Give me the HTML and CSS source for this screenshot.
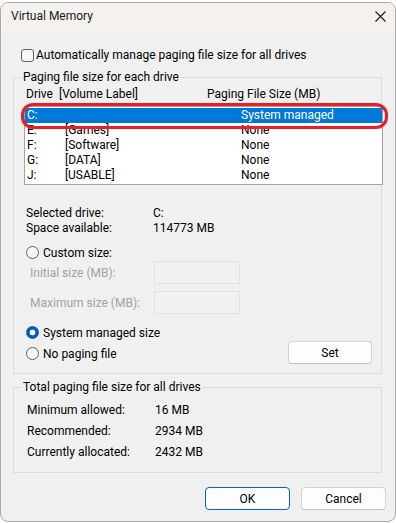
FILE: index.html
```html
<!DOCTYPE html>
<html>
<head>
<meta charset="utf-8">
<title>Virtual Memory</title>
<link rel="stylesheet" href="styles.css">
</head>
<body>
<div class="window">
  <div class="titlebar">
    <span class="title">Virtual Memory</span>
    <svg class="close" width="11" height="11" viewBox="0 0 11 11"><path d="M0.5 0.5L10.5 10.5M10.5 0.5L0.5 10.5" stroke="#1b1b1b" stroke-width="1.1" fill="none"/></svg>
  </div>
  <div class="content">
    <div class="check-row"><span class="checkbox"></span><span>Automatically manage paging file size for all drives</span></div>

    <fieldset class="group group-drive">
      <legend>Paging file size for each drive</legend>
      <div class="list-head"><span class="h-drive">Drive</span><span class="h-label">[Volume Label]</span><span>Paging File Size (MB)</span></div>
      <div class="listbox">
        <div class="row selected"><span class="c-drive">C:</span><span class="c-label"></span><span>System managed</span></div>
        <div class="row"><span class="c-drive">E:</span><span class="c-label">[Games]</span><span>None</span></div>
        <div class="row"><span class="c-drive">F:</span><span class="c-label">[Software]</span><span>None</span></div>
        <div class="row"><span class="c-drive">G:</span><span class="c-label">[DATA]</span><span>None</span></div>
        <div class="row"><span class="c-drive">J:</span><span class="c-label">[USABLE]</span><span>None</span></div>
        <div class="annotation"></div>
      </div>

      <div class="info">
        <span>Selected drive:</span><span>C:</span>
        <span>Space available:</span><span>114773 MB</span>
      </div>

      <div class="radio-row custom"><span class="radio"></span><span>Custom size:</span></div>
      <div class="size-row first"><span class="size-label">Initial size (MB):</span><span class="textbox"></span></div>
      <div class="size-row"><span class="size-label">Maximum size (MB):</span><span class="textbox"></span></div>

      <div class="bottom-row">
        <div class="radio-col">
          <div class="radio-row"><span class="radio checked"></span><span>System managed size</span></div>
          <div class="radio-row"><span class="radio"></span><span>No paging file</span></div>
        </div>
        <button class="btn set">Set</button>
      </div>
    </fieldset>

    <fieldset class="group group-total">
      <legend>Total paging file size for all drives</legend>
      <div class="totals">
        <span>Minimum allowed:</span><span>16 MB</span>
        <span>Recommended:</span><span>2934 MB</span>
        <span>Currently allocated:</span><span>2432 MB</span>
      </div>
    </fieldset>

    <div class="actions">
      <button class="btn ok">OK</button>
      <button class="btn">Cancel</button>
    </div>
  </div>
</div>
</body>
</html>
```

FILE: styles.css
```css
* { box-sizing: border-box; }
html, body { margin: 0; padding: 0; }
body {
  background: #ffffff;
  font-family: Roboto, "Noto Sans", "Liberation Sans", sans-serif;
  font-size: 12px;
  color: #000;
}
.window {
  width: 396px;
  height: 520px;
  margin-top: 2px;
  background: #f0f0f0;
  border: 1px solid #a9a9a9;
  border-radius: 8px;
  overflow: hidden;
  display: flex;
  flex-direction: column;
}
.titlebar {
  height: 30px;
  flex: none;
  background: #f4f1ee;
  display: flex;
  align-items: center;
  justify-content: space-between;
  padding: 0 9px 4px 10px;
}
.title { line-height: 14px; color: #1a1a1a; }
.close { display: block; margin-top: 1px; }

.content {
  padding: 16px 9px 0 12px;
  display: flex;
  flex-direction: column;
}
.check-row {
  display: flex;
  align-items: center;
  height: 13px;
  line-height: 13px;
  padding-left: 8px;
  gap: 2px;
}
.checkbox {
  width: 13px;
  height: 13px;
  border: 1px solid #616161;
  border-radius: 3px;
  background: #f6f6f6;
  flex: none;
}

.group {
  margin: 8px 4px 0 0;
  padding: 0 0 9px 0;
  border: 1px solid #dcdcdc;
  min-width: 0;
}
.group legend {
  margin-left: 8px;
  padding: 0 1px;
  line-height: 14px;
}
.list-head {
  display: flex;
  padding: 3px 0 0 12px;
  line-height: 14px;
}
.h-drive { width: 33px; }
.h-label { width: 148px; }

.listbox {
  position: relative;
  margin: 5px -2px 0 10px;
  border: 1px solid #a3a3a3;
  background: #fff;
  padding: 1px 0 1px;
}
.row {
  display: flex;
  height: 15px;
  line-height: 15px;
  padding-left: 2px;
  color: #000;
}
.row.selected { background: #0078d7; color: #fff; }
.c-drive { width: 38px; }
.c-label { width: 176px; }
.annotation {
  position: absolute;
  left: -4px;
  top: -4px;
  width: 367px;
  height: 26px;
  border: 3px solid #e3202b;
  border-radius: 12px;
  box-shadow: 0 0 1px rgba(120, 0, 0, 0.4);
  pointer-events: none;
}

.info {
  display: grid;
  grid-template-columns: 127px auto;
  line-height: 15px;
  margin-top: 21px;
  padding-left: 12px;
}

.radio-row {
  display: flex;
  align-items: center;
  height: 15px;
  gap: 4px;
  padding-left: 12px;
}
.radio-row.custom { margin-top: 9px; }
.radio {
  width: 13px;
  height: 13px;
  flex: none;
  border: 1px solid #5f5f5f;
  border-radius: 50%;
  background: #f7f7f7;
}
.radio.checked {
  border-color: #005fb8;
  background: radial-gradient(circle, #ffffff 0 2.6px, #005fb8 3.2px);
}

.size-row {
  display: flex;
  align-items: center;
  height: 23px;
  padding-left: 16px;
  margin-top: 7px;
  color: #a3a3a3;
}
.size-row.first { margin-top: 1px; }
.size-label { width: 124px; }
.textbox {
  width: 86px;
  height: 23px;
  border: 1px solid #e2e2e2;
  background: #f1f1f1;
}

.bottom-row {
  display: flex;
  justify-content: space-between;
  align-items: flex-end;
  margin-top: 11px;
  padding-right: 9px;
}
.radio-col {
  display: flex;
  flex-direction: column;
  gap: 6px;
  padding-bottom: 3px;
}

.btn {
  width: 85px;
  height: 23px;
  padding: 0;
  font-family: inherit;
  font-size: 12px;
  color: #000;
  background: #fdfdfd;
  border: 1px solid #d2d2d2;
  border-bottom-color: #c2c2c2;
  border-radius: 4px;
}
.btn.set { width: 84px; }
.btn.ok { border: 1px solid #0067c0; }

.group-total { margin-top: 6px; }
.totals {
  display: grid;
  grid-template-columns: 128px auto;
  line-height: 21px;
  padding: 6px 0 0 13px;
}

.actions {
  display: flex;
  justify-content: flex-end;
  gap: 11px;
  margin-top: 14px;
}
```
